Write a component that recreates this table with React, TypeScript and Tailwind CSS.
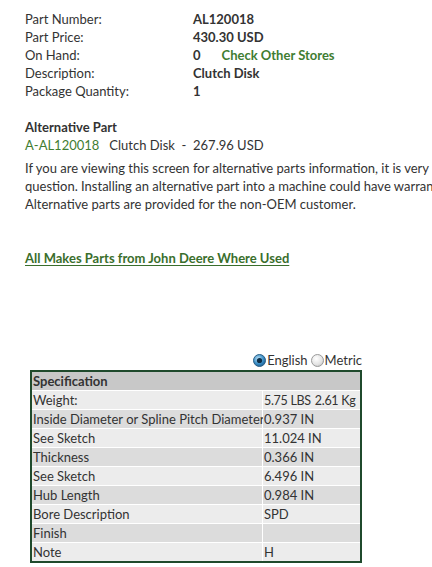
const details = [
  { label: 'Part Number:', value: 'AL120018' },
  { label: 'Part Price:', value: '430.30 USD' },
  { label: 'On Hand:', value: '0', link: 'Check Other Stores' },
  { label: 'Description:', value: 'Clutch Disk' },
  { label: 'Package Quantity:', value: '1' },
];

const specs = [
  { name: 'Weight:', value: '5.75 LBS', extra: '2.61 Kg' },
  { name: 'Inside Diameter or Spline Pitch Diameter', value: '0.937 IN' },
  { name: 'See Sketch', value: '11.024 IN' },
  { name: 'Thickness', value: '0.366 IN' },
  { name: 'See Sketch', value: '6.496 IN' },
  { name: 'Hub Length', value: '0.984 IN' },
  { name: 'Bore Description', value: 'SPD' },
  { name: 'Finish', value: '' },
  { name: 'Note', value: 'H' },
];

function Radio({ checked }: { checked: boolean }) {
  return (
    <svg width="13" height="13" viewBox="0 0 13 13" className="shrink-0">
      <defs>
        <radialGradient id="rOn" cx="40%" cy="35%" r="70%">
          <stop offset="0%" stopColor="#bfe3f7" />
          <stop offset="60%" stopColor="#3b8fc7" />
          <stop offset="100%" stopColor="#1b5a8c" />
        </radialGradient>
        <radialGradient id="rOff" cx="40%" cy="35%" r="70%">
          <stop offset="0%" stopColor="#ffffff" />
          <stop offset="70%" stopColor="#e2e2e2" />
          <stop offset="100%" stopColor="#c4c4c4" />
        </radialGradient>
      </defs>
      <circle cx="6.5" cy="6.5" r="6" fill={checked ? 'url(#rOn)' : 'url(#rOff)'} stroke={checked ? '#2a5f86' : '#9a9a9a'} strokeWidth="1" />
      {checked && <circle cx="6.5" cy="6.5" r="2.6" fill="#0d2c45" />}
    </svg>
  );
}

export default function App() {
  return (
    <div className="w-[432px] h-[567px] overflow-hidden bg-white text-[13px] leading-[18px] text-[#333] font-['Lato','Liberation_Sans',sans-serif]">
      <div className="pt-[10px] pl-[25px]">
        {/* Part details */}
        <div className="flex flex-col">
          {details.map((d) => (
            <div key={d.label} className="flex">
              <span className="w-[168px]">{d.label}</span>
              <span className="font-bold">{d.value}</span>
              {d.link && <span className="ml-[21px] font-bold text-[#3f7d32]">{d.link}</span>}
            </div>
          ))}
        </div>

        {/* Alternative part */}
        <div className="mt-[18px] font-bold">Alternative Part</div>
        <div>
          <span className="text-[#3f7d32]">A-AL120018</span>
          <span className="whitespace-pre">{'   Clutch Disk  -  267.96 USD'}</span>
        </div>
        <div className="mt-[5px] whitespace-nowrap">
          <div>If you are viewing this screen for alternative parts information, it is very important that you verify the part in</div>
          <div>question. Installing an alternative part into a machine could have warranty implications.</div>
          <div>Alternative parts are provided for the non-OEM customer.</div>
        </div>

        <div className="mt-[36px]">
          <span className="font-bold text-[#3a6e2c] underline underline-offset-2">All Makes Parts from John Deere Where Used</span>
        </div>
      </div>

      {/* Units toggle */}
      <div className="mt-[84px] flex justify-end w-[362px] items-center gap-[1px]">
        <Radio checked />
        <span className="mr-[2px]">English</span>
        <Radio checked={false} />
        <span>Metric</span>
      </div>

      {/* Specification table */}
      <div className="ml-[30px] mt-[1px] w-[332px] border-2 border-[#1f4a2c] bg-white">
        <div className="grid grid-cols-[230px_97px] gap-px">
          <div className="col-span-2 h-[18px] bg-[#c8c8c8] font-bold pl-[1px]">Specification</div>
          {specs.map((s, i) => {
            const bg = i % 2 === 0 ? 'bg-[#ececec]' : 'bg-[#dcdcdc]';
            return [
              <div key={`n${i}`} className={`${bg} h-[18px] pl-[1px] whitespace-nowrap`}>{s.name}</div>,
              <div key={`v${i}`} className={`${bg} h-[18px] pl-[1px] whitespace-nowrap`}>
                {s.extra ? (
                  <span className="text-[12.5px] tracking-[-0.3px]">
                    {s.value}
                    <span className="ml-[4px]">{s.extra}</span>
                  </span>
                ) : (
                  s.value
                )}
              </div>,
            ];
          })}
        </div>
      </div>
    </div>
  );
}
